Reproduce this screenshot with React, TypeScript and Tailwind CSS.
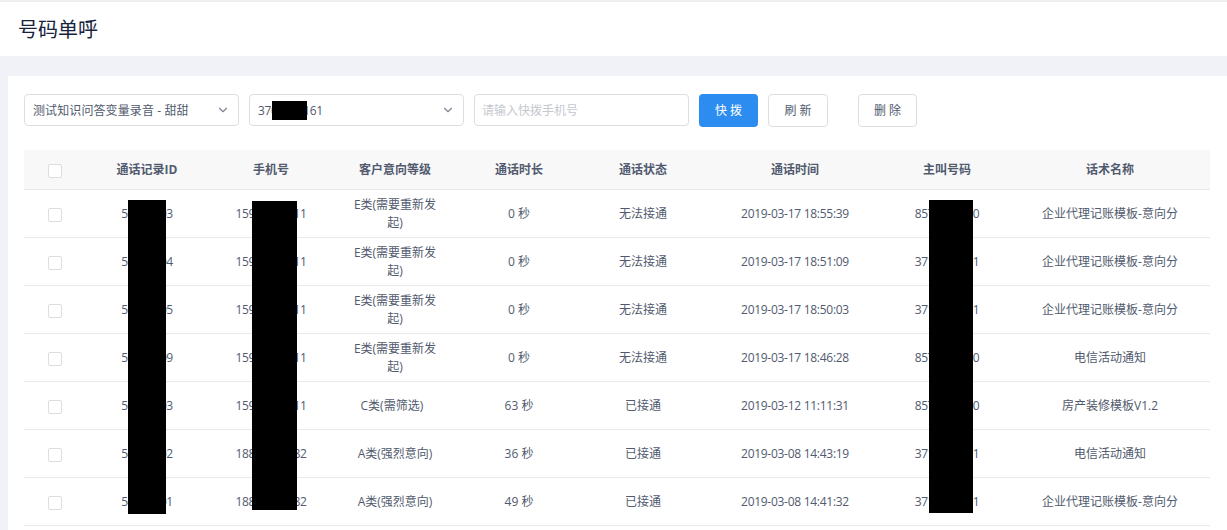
import { ChevronDown } from 'lucide-react';

interface CallRecord {
  id: string;
  phone: string;
  level: string;
  duration: string;
  status: string;
  time: string;
  caller: string;
  script: string;
}

const records: CallRecord[] = [
  { id: '50000003', phone: '15900000011', level: 'E类(需要重新发起)', duration: '0 秒', status: '无法接通', time: '2019-03-17 18:55:39', caller: '8570000000', script: '企业代理记账模板-意向分' },
  { id: '50000004', phone: '15900000011', level: 'E类(需要重新发起)', duration: '0 秒', status: '无法接通', time: '2019-03-17 18:51:09', caller: '3710000001', script: '企业代理记账模板-意向分' },
  { id: '50000005', phone: '15900000011', level: 'E类(需要重新发起)', duration: '0 秒', status: '无法接通', time: '2019-03-17 18:50:03', caller: '3710000001', script: '企业代理记账模板-意向分' },
  { id: '50000009', phone: '15900000011', level: 'E类(需要重新发起)', duration: '0 秒', status: '无法接通', time: '2019-03-17 18:46:28', caller: '8570000000', script: '电信活动通知' },
  { id: '50000003', phone: '15900000011', level: 'C类(需筛选)\u00a0\u00a0', duration: '63 秒', status: '已接通', time: '2019-03-12 11:11:31', caller: '8570000000', script: '房产装修模板V1.2' },
  { id: '54000002', phone: '18800000082', level: 'A类(强烈意向)', duration: '36 秒', status: '已接通', time: '2019-03-08 14:43:19', caller: '3710000001', script: '电信活动通知' },
  { id: '54000001', phone: '18800000082', level: 'A类(强烈意向)', duration: '49 秒', status: '已接通', time: '2019-03-08 14:41:32', caller: '3710000001', script: '企业代理记账模板-意向分' },
];

const headers = ['通话记录ID', '手机号', '客户意向等级', '通话时长', '通话状态', '通话时间', '主叫号码', '话术名称'];

function Checkbox() {
  return <span className="block mx-auto mt-[3px] w-[14px] h-[14px] rounded-[2px] border border-[#dcdee2] bg-white" />;
}

function SelectBox({ children }: { children: React.ReactNode }) {
  return (
    <div className="w-[215px] h-[32px] flex items-center justify-between pl-[8px] pr-[8px] rounded-[4px] border border-[#dcdee2] bg-white text-[12px] text-[#515a6e]">
      {children}
      <ChevronDown size={14} className="text-[#808695]" />
    </div>
  );
}

export default function App() {
  return (
    <div className="relative h-[530px] w-[1227px] overflow-hidden bg-[#f0f2f7] text-[#515a6e] font-['Open_Sans','Noto_Sans_CJK_SC',sans-serif]">
      <div className="h-[2px] bg-[#eeeeee]" />
      <div className="h-[54px] bg-white flex items-center pl-[18px] pt-[1px] text-[20px] text-[#17233d]">号码单呼</div>

      <div className="mt-[20px] ml-[8px] h-[454px] bg-white pt-[18px] pl-[16px] pr-[17px]">
        <div className="flex items-start">
          <SelectBox>
            <span className="pt-[1px] tracking-[0.1px]">测试知识问答变量录音 - 甜甜</span>
          </SelectBox>
          <div className="ml-[10px]">
            <SelectBox>
              <span className="pt-[1px] tracking-[-0.4px]">3700000161</span>
            </SelectBox>
          </div>
          <input
            placeholder="请输入快拨手机号"
            className="ml-[10px] w-[215px] h-[32px] px-[7px] rounded-[4px] border border-[#dcdee2] text-[12px] outline-none placeholder:text-[#c5c8ce]"
          />
          <button className="ml-[10px] w-[59px] h-[33px] pt-[1px] rounded-[4px] bg-[#2d8cf0] text-white text-[12px]">快 拨</button>
          <button className="ml-[10px] w-[60px] h-[33px] pt-[1px] rounded-[4px] border border-[#dcdee2] bg-white text-[12px]">刷 新</button>
          <button className="ml-[30px] w-[59px] h-[33px] pt-[1px] rounded-[4px] border border-[#dcdee2] bg-white text-[12px]">删 除</button>
        </div>

        <table className="mt-[23px] w-[1186px] table-fixed border-collapse text-[12px] text-center">
          <colgroup>
            <col className="w-[62px]" />
            <col className="w-[122px]" />
            <col className="w-[126px]" />
            <col className="w-[122px]" />
            <col className="w-[126px]" />
            <col className="w-[122px]" />
            <col className="w-[182px]" />
            <col className="w-[122px]" />
            <col className="w-[202px]" />
          </colgroup>
          <thead>
            <tr className="h-[39px] bg-[#f8f8f9] border-b border-[#e8eaec]">
              <th className="font-normal">
                <Checkbox />
              </th>
              {headers.map((h, i) => (
                <th key={h} className={i === 7 ? 'font-bold pt-[2px] pl-[2px]' : 'font-bold pt-[2px]'}>
                  {h}
                </th>
              ))}
            </tr>
          </thead>
          <tbody>
            {records.map((r, index) => (
              <tr key={index} className="h-[48px] border-b border-[#e8eaec]">
                <td>
                  <Checkbox />
                </td>
                <td className="pt-[2px] tracking-[-0.4px]">{r.id}</td>
                <td className="pt-[2px] tracking-[-0.4px]">{r.phone}</td>
                <td className="pt-[2px] px-[16px] leading-[18px]">{r.level}</td>
                <td className="pt-[2px]">{r.duration}</td>
                <td className="pt-[2px]">{r.status}</td>
                <td className="pt-[2px] tracking-[-0.28px]">{r.time}</td>
                <td className="pt-[2px] tracking-[-0.4px]">{r.caller}</td>
                <td className="pt-[2px] pl-[2px]">{r.script}</td>
              </tr>
            ))}
          </tbody>
        </table>
      </div>

      {/* redaction bars sitting on top of the page */}
      <div className="absolute left-[272px] top-[101px] w-[35px] h-[19px] bg-black" />
      <div className="absolute left-[128px] top-[200px] w-[38px] h-[314px] bg-black" />
      <div className="absolute left-[252px] top-[201px] w-[45px] h-[309px] bg-black" />
      <div className="absolute left-[929px] top-[200px] w-[44px] h-[313px] bg-black" />
    </div>
  );
}
